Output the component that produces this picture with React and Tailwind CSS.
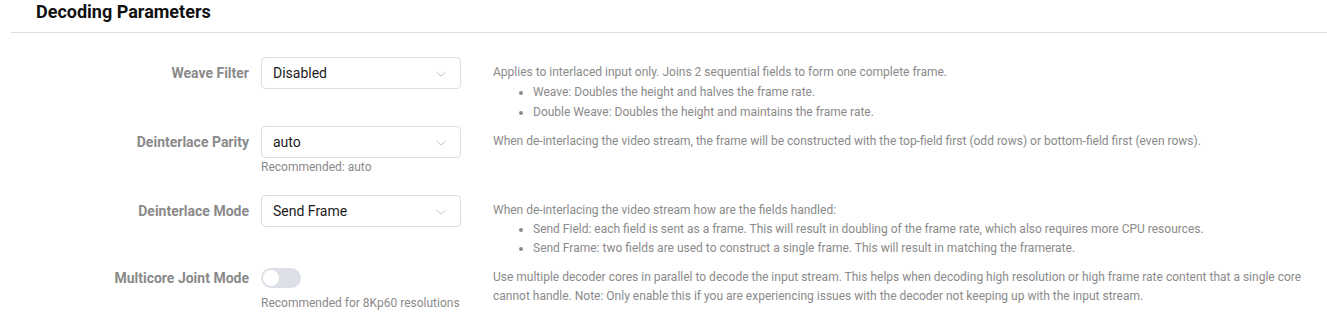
import React from "react";

function Chevron() {
  return (
    <svg width="12" height="12" viewBox="0 0 12 12" className="absolute right-[13px] top-[10px]">
      <path d="M1.5 4 L6 8 L10.5 4" fill="none" stroke="#c0c4cc" strokeWidth="1" />
    </svg>
  );
}

function Select({ value }) {
  return (
    <div className="relative w-[200px] h-[32px] border border-[#dcdfe6] rounded-[4px] bg-white flex items-center pl-[11px] text-[14px] text-[#1b1b1b]">
      {value}
      <Chevron />
    </div>
  );
}

function Label({ children }) {
  return (
    <div className="w-[250px] shrink-0 pr-[12px] text-right text-[14px] font-bold leading-[32px] text-[#8a8a8a]">
      {children}
    </div>
  );
}

function Hint({ children }) {
  return <div className="text-[12px] leading-[18px] text-[#8a8a8a]">{children}</div>;
}

function Help({ children }) {
  return (
    <div className="ml-[32px] pt-[6px] text-[12px] leading-[19px] text-[#8a8a8a]">{children}</div>
  );
}

export default function App() {
  return (
    <div className="w-[1327px] h-[333px] bg-white" style={{ fontFamily: "Roboto, 'Liberation Sans', sans-serif" }}>
      <div className="ml-[11px] h-[33px] border-b border-[#dde0e8] pl-[25px]">
        <h2 className="text-[18px] font-bold leading-[24px] text-[#111] pt-[0px]">Decoding Parameters</h2>
      </div>
      <div className="ml-[11px] pt-[24px]">
        <div className="flex items-start h-[69px]">
          <Label>Weave Filter</Label>
          <div className="w-[200px] shrink-0">
            <Select value="Disabled" />
          </div>
          <Help>
            <p>Applies to interlaced input only. Joins 2 sequential fields to form one complete frame.</p>
            <ul className="list-disc pl-[40px] leading-[20px]">
              <li>Weave: Doubles the height and halves the frame rate.</li>
              <li>Double Weave: Doubles the height and maintains the frame rate.</li>
            </ul>
          </Help>
        </div>
        <div className="flex items-start h-[69px]">
          <Label>Deinterlace Parity</Label>
          <div className="w-[200px] shrink-0">
            <Select value="auto" />
            <Hint>Recommended: auto</Hint>
          </div>
          <Help>
            <p>When de-interlacing the video stream, the frame will be constructed with the top-field first (odd rows) or bottom-field first (even rows).</p>
          </Help>
        </div>
        <div className="flex items-start h-[67px]">
          <Label>Deinterlace Mode</Label>
          <div className="w-[200px] shrink-0">
            <Select value="Send Frame" />
          </div>
          <Help>
            <p>When de-interlacing the video stream how are the fields handled:</p>
            <ul className="list-disc pl-[40px]">
              <li>Send Field: each field is sent as a frame. This will result in doubling of the frame rate, which also requires more CPU resources.</li>
              <li>Send Frame: two fields are used to construct a single frame. This will result in matching the framerate.</li>
            </ul>
          </Help>
        </div>
        <div className="flex items-start">
          <Label>Multicore Joint Mode</Label>
          <div className="w-[200px] shrink-0">
            <div className="h-[32px] flex items-center">
              <div className="w-[40px] h-[20px] rounded-full bg-[#dcdfe6] relative">
                <div className="absolute left-[2px] top-[2px] w-[16px] h-[16px] rounded-full bg-white"></div>
              </div>
            </div>
            <Hint>Recommended for 8Kp60 resolutions</Hint>
          </div>
          <Help>
            <p className="w-[820px]">Use multiple decoder cores in parallel to decode the input stream. This helps when decoding high resolution or high frame rate content that a single core cannot handle. Note: Only enable this if you are experiencing issues with the decoder not keeping up with the input stream.</p>
          </Help>
        </div>
      </div>
    </div>
  );
}
